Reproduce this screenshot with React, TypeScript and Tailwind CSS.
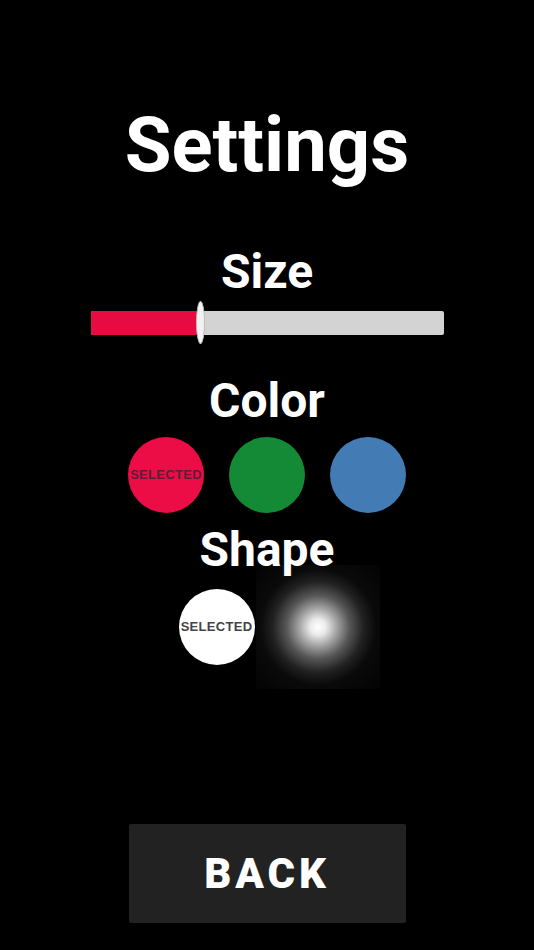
const colors = [
  { name: "red", bg: "bg-[#ec0c46]" },
  { name: "green", bg: "bg-[#148a37]" },
  { name: "blue", bg: "bg-[#437bb5]" },
];

export default function App() {
  const selectedColor = "red";

  return (
    <div className="min-h-screen w-full bg-black text-white font-['Roboto',sans-serif] flex flex-col items-center">
      <h1 className="mt-[107px] text-[76px] font-bold leading-none">Settings</h1>

      {/* Size slider */}
      <h2 className="mt-[65px] text-[48px] font-bold leading-none">Size</h2>
      <div className="relative mt-[5px] h-[43px] w-[353px] flex items-center">
        <div className="h-[24px] w-full rounded-[2px] bg-[#d3d3d3] overflow-hidden">
          <div className="h-full w-[109px] bg-[#e60b40]" />
        </div>
        <div className="absolute left-[105px] top-0 h-[43px] w-[9px] rounded-[50%] bg-[#f2f2f2] border border-[#bdbdbd]" />
      </div>

      {/* Colors */}
      <h2 className="mt-[33px] text-[48px] font-bold leading-none">Color</h2>
      <div className="mt-[12px] flex gap-[25px]">
        {colors.map((c) => (
          <div
            key={c.name}
            className={`h-[76px] w-[76px] rounded-full ${c.bg} flex items-center justify-center`}
          >
            {c.name === selectedColor && (
              <span className="font-['Liberation_Sans',sans-serif] text-[13px] font-bold tracking-[0.3px] text-[#5e1c3a]">
                SELECTED
              </span>
            )}
          </div>
        ))}
      </div>

      {/* Shapes */}
      <h2 className="relative z-10 mt-[13px] text-[48px] font-bold leading-none">Shape</h2>
      <div className="mt-[15px] flex gap-[25px]">
        <div className="h-[76px] w-[76px] rounded-full bg-white flex items-center justify-center">
          <span className="font-['Liberation_Sans',sans-serif] text-[13px] font-bold tracking-[0.3px] text-[#444]">
            SELECTED
          </span>
        </div>
        <div className="relative h-[76px] w-[76px]">
          <div className="absolute -left-[24px] -top-[24px] h-[124px] w-[124px] bg-[radial-gradient(circle,#ffffff_0%,rgba(255,255,255,0.92)_9%,rgba(255,255,255,0.65)_21%,rgba(255,255,255,0.34)_36%,rgba(255,255,255,0.13)_52%,rgba(255,255,255,0.04)_66%,rgba(255,255,255,0.012)_100%)]" />
        </div>
      </div>

      <button className="mt-[159px] h-[99px] w-[277px] rounded-[2px] bg-[#222222] text-[42px] font-black tracking-[4px] text-white">
        BACK
      </button>
    </div>
  );
}
